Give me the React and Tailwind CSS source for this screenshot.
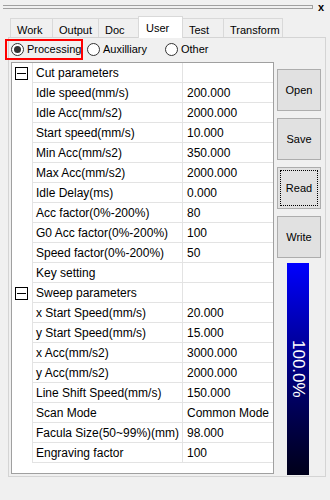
import React from "react";

const tabs = [
  { label: "Work", w: "w-[42px]" },
  { label: "Output", w: "w-[46px]" },
  { label: "Doc", w: "w-[40px]" },
  { label: "User", w: "w-[45px]", active: true },
  { label: "Test", w: "w-[40px]" },
  { label: "Transform", w: "w-[60px]", last: true },
];

const rows = [
  { group: true, name: "Cut parameters" },
  { name: "Idle speed(mm/s)", value: "200.000" },
  { name: "Idle Acc(mm/s2)", value: "2000.000" },
  { name: "Start speed(mm/s)", value: "10.000" },
  { name: "Min Acc(mm/s2)", value: "350.000" },
  { name: "Max Acc(mm/s2)", value: "2000.000" },
  { name: "Idle Delay(ms)", value: "0.000" },
  { name: "Acc factor(0%-200%)", value: "80" },
  { name: "G0 Acc factor(0%-200%)", value: "100" },
  { name: "Speed factor(0%-200%)", value: "50" },
  { name: "Key setting", value: "" },
  { group: true, name: "Sweep parameters" },
  { name: "x Start Speed(mm/s)", value: "20.000" },
  { name: "y Start Speed(mm/s)", value: "15.000" },
  { name: "x Acc(mm/s2)", value: "3000.000" },
  { name: "y Acc(mm/s2)", value: "2000.000" },
  { name: "Line Shift Speed(mm/s)", value: "150.000" },
  { name: "Scan Mode", value: "Common Mode" },
  { name: "Facula Size(50~99%)(mm)", value: "98.000" },
  { name: "Engraving factor", value: "100" },
];

const Toggle = () => (
  <svg width="13" height="13" viewBox="0 0 13 13" className="block">
    <rect x="0.5" y="0.5" width="12" height="12" fill="white" stroke="#000" />
    <line x1="2" y1="6.5" x2="11" y2="6.5" stroke="#000" />
  </svg>
);

const Radio = ({ checked, label, w }) => (
  <div className={`flex items-center ${w}`}>
    <span className="w-[13px] h-[13px] rounded-full border border-[#333] bg-white flex items-center justify-center">
      {checked && <span className="w-[7px] h-[7px] rounded-full bg-[#333]" />}
    </span>
    <span className="ml-[3px] text-[11px]">{label}</span>
  </div>
);

const Button = ({ label, focused }) => (
  <div className="relative h-[42px] w-[44px] bg-[#e1e1e1] border border-[#adadad] flex items-center justify-center text-[11px]">
    {focused && <div className="absolute inset-[2px] border border-dotted border-black" />}
    {label}
  </div>
);

export default function App() {
  return (
    <div className="relative w-[330px] h-[500px] overflow-hidden bg-[#f0f0f0] text-black font-['Liberation_Sans',Arial,sans-serif]">
      {/* top grip strip */}
      <div className="h-[16px] flex items-start">
        <div className="ml-[3px] mt-[5px] w-[310px] h-[4px] border-y border-r border-[#a0a0a0]" />
        <span className="ml-[5px] mt-[1px] text-[11px] font-bold leading-[12px]">x</span>
      </div>

      {/* tabs */}
      <div className="relative z-10 ml-[10px] h-[22px] -mb-px flex items-start">
        {tabs.map((t) =>
          t.active ? (
            <div
              key={t.label}
              className={`${t.w} h-[22px] bg-white border-x border-t border-[#d9d9d9] pl-[7px] pt-[3px] text-[11px]`}
            >
              {t.label}
            </div>
          ) : (
            <div
              key={t.label}
              className={`${t.w} mt-[2px] h-[19px] border-t ${t.label === "Test" ? "" : "border-l"} ${
                t.last ? "border-r" : ""
              } border-[#d9d9d9] pl-[6px] pt-[3px] text-[11px]`}
            >
              {t.label}
            </div>
          )
        )}
      </div>

      {/* tab page */}
      <div className="ml-[8px] w-[318px] h-[440px] border border-[#d4d4d4]">
        <div className="mt-px h-[20px] pl-[2px] flex items-center">
          <Radio checked label="Processing" w="w-[76px]" />
          <Radio label="Auxilliary" w="w-[78px]" />
          <Radio label="Other" w="w-[60px]" />
        </div>

        <div className="mt-[3px] flex items-start">
          {/* property grid */}
          <div className="ml-[2px] w-[263px] h-[412px] border border-[#a0a0a0] bg-white text-[12px]">
            {rows.map((r, i) => (
              <div key={i} className="h-[20px] flex">
                <div className="w-[20px] flex items-center pl-[3px]">{r.group && <Toggle />}</div>
                <div className="flex-1 flex border-l border-b border-[#e3e3e3]">
                  <div className="w-[150px] pl-[3px] border-r border-[#e3e3e3] flex items-center overflow-hidden whitespace-nowrap">
                    {r.name}
                  </div>
                  <div className="flex-1 pl-[4px] flex items-center overflow-hidden whitespace-nowrap">
                    {r.value}
                  </div>
                </div>
              </div>
            ))}
          </div>

          {/* buttons + progress */}
          <div className="ml-[3px] pt-[7px] flex flex-col">
            <div className="flex flex-col gap-[7px]">
              <Button label="Open" />
              <Button label="Save" />
              <Button label="Read" focused />
              <Button label="Write" />
            </div>
            <div className="mt-[5px] ml-[10px] w-[22px] h-[212px] bg-linear-to-b from-[#0000ff] via-[#000080] to-[#00001a] flex items-center justify-center">
              <span className="[writing-mode:vertical-rl] text-white text-[17px] leading-none">100.0%</span>
            </div>
          </div>
        </div>
      </div>

      {/* annotation box */}
      <div className="absolute left-[5px] top-[39px] w-[78px] h-[21px] border-2 border-[#ff0000]" />
    </div>
  );
}
